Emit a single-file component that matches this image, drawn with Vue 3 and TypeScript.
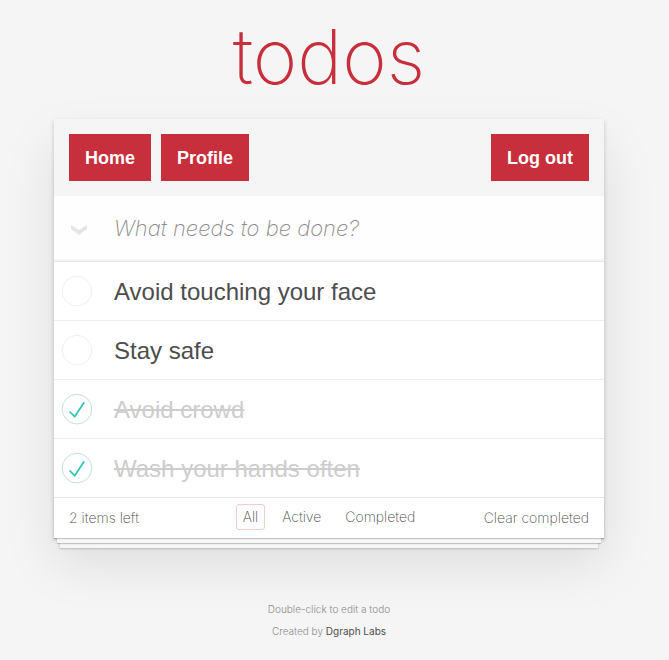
<script setup lang="ts">
import { computed, ref } from 'vue'

interface Todo {
  id: number
  title: string
  completed: boolean
}

type Filter = 'All' | 'Active' | 'Completed'

const filters: Filter[] = ['All', 'Active', 'Completed']
const filter = ref<Filter>('All')
const draft = ref('')
const todos = ref<Todo[]>([
  { id: 1, title: 'Avoid touching your face', completed: false },
  { id: 2, title: 'Stay safe', completed: false },
  { id: 3, title: 'Avoid crowd', completed: true },
  { id: 4, title: 'Wash your hands often', completed: true },
])

const remaining = computed(() => todos.value.filter((t) => !t.completed).length)
const visible = computed(() =>
  todos.value.filter((t) =>
    filter.value === 'All' ? true : filter.value === 'Completed' ? t.completed : !t.completed,
  ),
)

function addTodo() {
  const title = draft.value.trim()
  if (!title) return
  todos.value.push({ id: Date.now(), title, completed: false })
  draft.value = ''
}

function toggleAll() {
  const done = remaining.value > 0
  todos.value.forEach((t) => (t.completed = done))
}

function clearCompleted() {
  todos.value = todos.value.filter((t) => !t.completed)
}
</script>

<template>
  <div class="page">
    <h1 class="title">todos</h1>

    <main class="card">
      <nav class="nav">
        <button type="button" class="nav-button">Home</button>
        <button type="button" class="nav-button">Profile</button>
        <button type="button" class="nav-button logout">Log out</button>
      </nav>

      <form class="entry" @submit.prevent="addTodo">
        <button type="button" class="toggle-all" aria-label="Mark all as complete" @click="toggleAll">
          <svg width="16" height="10" viewBox="0 0 16 10" aria-hidden="true">
            <path d="M0 0 L8 5 L16 0 V4 L8 10 L0 4 Z" fill="#e6e6e6" />
          </svg>
        </button>
        <input
          v-model="draft"
          class="new-todo"
          type="text"
          placeholder="What needs to be done?"
          aria-label="New todo"
        />
      </form>

      <ul class="list">
        <li v-for="todo in visible" :key="todo.id" class="item">
          <span class="toggle">
            <input :id="`todo-${todo.id}`" v-model="todo.completed" type="checkbox" class="check" />
            <svg class="mark" width="40" height="40" viewBox="-10 -18 100 135" aria-hidden="true">
              <circle
                cx="50"
                cy="50"
                r="50"
                fill="none"
                :stroke="todo.completed ? '#bddad5' : '#ededed'"
                stroke-width="3"
              />
              <path v-if="todo.completed" fill="#2fc7b1" d="M72 25L42 71 27 56l-4 4 20 20 34-52z" />
            </svg>
          </span>
          <label :for="`todo-${todo.id}`" class="text" :class="{ done: todo.completed }">{{ todo.title }}</label>
        </li>
      </ul>

      <footer class="footer">
        <span class="count">{{ remaining }} items left</span>
        <div class="filters">
          <a
            v-for="name in filters"
            :key="name"
            href="#"
            class="filter"
            :class="{ selected: name === filter }"
            @click.prevent="filter = name"
            >{{ name }}</a
          >
        </div>
        <button type="button" class="clear" @click="clearCompleted">Clear completed</button>
      </footer>
    </main>

    <footer class="info">
      <p>Double-click to edit a todo</p>
      <p>Created by <a href="#" class="credit">Dgraph Labs</a></p>
    </footer>
  </div>
</template>

<style>
body {
  background: #f5f5f5;
}
</style>

<style scoped>
.page {
  max-width: 550px;
  margin: 0 auto;
  padding: 0 11px 0 0;
  font-family: "Liberation Sans", Arial, sans-serif;
  color: #4d4d4d;
}

.title {
  margin: 0;
  padding: 6px 0 13px;
  font-family: Inter, sans-serif;
  font-size: 76px;
  line-height: 100px;
  font-weight: 200;
  text-align: center;
  color: #c62f3b;
}

.card {
  position: relative;
  background: #fff;
  box-shadow: 0 2px 4px rgba(0, 0, 0, 0.2), 0 25px 50px rgba(0, 0, 0, 0.1);
}

.nav {
  display: flex;
  gap: 10px;
  padding: 15px;
  background: #f5f5f5;
}

.nav-button {
  padding: 2px 16px 0;
  border: 0;
  background: #c62f3b;
  color: #fff;
  font: bold 18px/45px "Liberation Sans", Arial, sans-serif;
}

.logout {
  margin-left: auto;
}

.entry {
  display: flex;
  align-items: center;
  height: 65px;
  background: #fefefe;
  box-shadow: inset 0 -2px 1px rgba(0, 0, 0, 0.03);
}

.toggle-all {
  display: grid;
  place-items: center;
  flex: none;
  width: 50px;
  height: 65px;
  padding: 2px 0 0;
  border: 0;
  background: none;
}

.new-todo {
  flex: 1;
  min-width: 0;
  padding: 0 10px;
  border: 0;
  outline: 0;
  background: none;
  color: #4d4d4d;
  font: 22px/32px "Liberation Sans", Arial, sans-serif;
}

.new-todo::placeholder {
  color: #8c8c8c;
  opacity: 1;
  font-family: Inter, sans-serif;
  font-style: italic;
  font-weight: 200;
}

.list {
  margin: 0;
  padding: 0;
  border-top: 1px solid #e6e6e6;
  list-style: none;
}

.item {
  display: flex;
  align-items: center;
  border-bottom: 1px solid #ededed;
}

.item:last-child {
  border-bottom: 0;
}

.toggle {
  position: relative;
  flex: none;
  width: 40px;
  height: 40px;
}

.check {
  position: absolute;
  inset: 0;
  width: 100%;
  height: 100%;
  margin: 0;
  appearance: none;
}

.mark {
  position: relative;
  display: block;
  overflow: visible;
  pointer-events: none;
}

.text {
  padding: 16px 20px 14px;
  font-size: 24px;
  line-height: 28px;
}

.done {
  color: #cdcdcd;
  text-decoration: line-through;
}

.footer {
  display: grid;
  grid-template-columns: 1fr auto 1fr;
  align-items: center;
  height: 38px;
  padding: 0 15px 2px;
  border-top: 1px solid #e6e6e6;
  font-family: Inter, sans-serif;
  font-size: 14px;
  font-weight: 200;
  box-shadow:
    0 1px 1px rgba(0, 0, 0, 0.2),
    0 8px 0 -3px #f6f6f6,
    0 9px 1px -3px rgba(0, 0, 0, 0.2),
    0 16px 0 -6px #f6f6f6,
    0 17px 2px -6px rgba(0, 0, 0, 0.2);
}

.filters {
  display: flex;
  gap: 10px;
}

.filter {
  padding: 0 6px;
  border: 1px solid transparent;
  border-radius: 3px;
  color: inherit;
  line-height: 24px;
  text-decoration: none;
}

.selected {
  border-color: #f0cdd0;
}

.clear {
  justify-self: end;
  padding: 0;
  border: 0;
  background: none;
  color: inherit;
  font: inherit;
}

.info {
  padding: 60px 0 0;
  font-family: Inter, sans-serif;
  font-size: 10px;
  font-weight: 300;
  line-height: 22px;
  text-align: center;
  color: #8c8c8c;
}

.info p {
  margin: 0;
}

.credit {
  color: #4d4d4d;
  font-weight: 400;
  text-decoration: none;
}
</style>
